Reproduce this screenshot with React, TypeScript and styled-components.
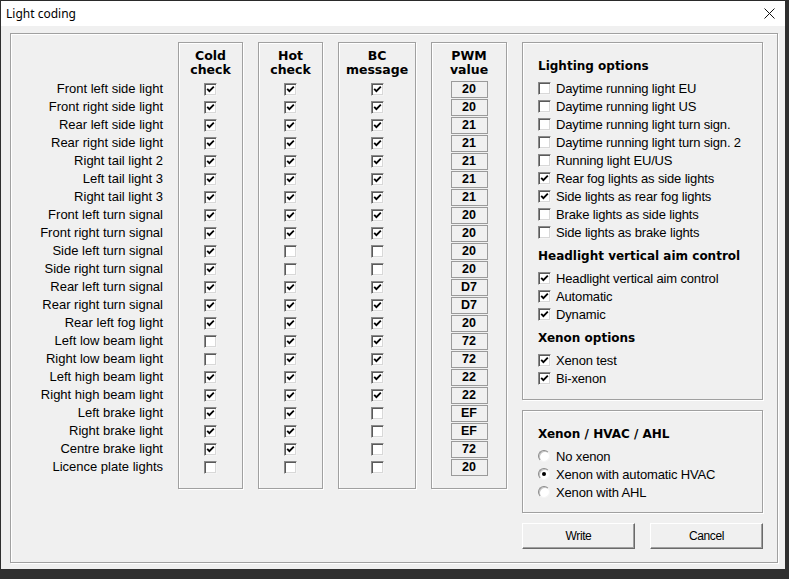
import React, { useState } from 'react';
import styled, { createGlobalStyle } from 'styled-components';

const GlobalStyle = createGlobalStyle`
    html, body {
        margin: 0;
        padding: 0;
        background: #2f2f2f;
    }
    body {
        font-family: "Liberation Sans", Arial, sans-serif;
        font-size: 13px;
        color: #000;
    }
`;

type LightRow = {
    label: string;
    cold: boolean;
    hot: boolean;
    bc: boolean;
    pwm: string;
};

const lightRows: LightRow[] = [
    { label: 'Front left side light', cold: true, hot: true, bc: true, pwm: '20' },
    { label: 'Front right side light', cold: true, hot: true, bc: true, pwm: '20' },
    { label: 'Rear left side light', cold: true, hot: true, bc: true, pwm: '21' },
    { label: 'Rear right side light', cold: true, hot: true, bc: true, pwm: '21' },
    { label: 'Right tail light 2', cold: true, hot: true, bc: true, pwm: '21' },
    { label: 'Left tail light 3', cold: true, hot: true, bc: true, pwm: '21' },
    { label: 'Right tail light 3', cold: true, hot: true, bc: true, pwm: '21' },
    { label: 'Front left turn signal', cold: true, hot: true, bc: true, pwm: '20' },
    { label: 'Front right turn signal', cold: true, hot: true, bc: true, pwm: '20' },
    { label: 'Side left turn signal', cold: true, hot: false, bc: false, pwm: '20' },
    { label: 'Side right turn signal', cold: true, hot: false, bc: false, pwm: '20' },
    { label: 'Rear left turn signal', cold: true, hot: true, bc: true, pwm: 'D7' },
    { label: 'Rear right turn signal', cold: true, hot: true, bc: true, pwm: 'D7' },
    { label: 'Rear left fog light', cold: true, hot: true, bc: true, pwm: '20' },
    { label: 'Left low beam light', cold: false, hot: true, bc: true, pwm: '72' },
    { label: 'Right low beam light', cold: false, hot: true, bc: true, pwm: '72' },
    { label: 'Left high beam light', cold: true, hot: true, bc: true, pwm: '22' },
    { label: 'Right high beam light', cold: true, hot: true, bc: true, pwm: '22' },
    { label: 'Left brake light', cold: true, hot: true, bc: false, pwm: 'EF' },
    { label: 'Right brake light', cold: true, hot: true, bc: false, pwm: 'EF' },
    { label: 'Centre brake light', cold: true, hot: true, bc: false, pwm: '72' },
    { label: 'Licence plate lights', cold: false, hot: false, bc: false, pwm: '20' },
];

const optionGroups = [
    {
        title: 'Lighting options',
        items: [
            { label: 'Daytime running light EU', on: false },
            { label: 'Daytime running light US', on: false },
            { label: 'Daytime running light turn sign.', on: false },
            { label: 'Daytime running light turn sign. 2', on: false },
            { label: 'Running light EU/US', on: false },
            { label: 'Rear fog lights as side lights', on: true },
            { label: 'Side lights as rear fog lights', on: true },
            { label: 'Brake lights as side lights', on: false },
            { label: 'Side lights as brake lights', on: false },
        ],
    },
    {
        title: 'Headlight vertical aim control',
        items: [
            { label: 'Headlight vertical aim control', on: true },
            { label: 'Automatic', on: true },
            { label: 'Dynamic', on: true },
        ],
    },
    {
        title: 'Xenon options',
        items: [
            { label: 'Xenon test', on: true },
            { label: 'Bi-xenon', on: true },
        ],
    },
];

const xenonModes = ['No xenon', 'Xenon with automatic HVAC', 'Xenon with AHL'];

const Window = styled.div`
    margin-left: 1px;
    width: 784px;
    height: 569px;
    background: #f0f0f0;
    display: flex;
    flex-direction: column;
    box-sizing: border-box;
`;

const TitleBar = styled.div`
    height: 26px;
    flex: 0 0 26px;
    background: #fff;
    border-top: 1px solid #2a2a2a;
    box-sizing: border-box;
    display: flex;
    align-items: center;
    justify-content: space-between;
    padding: 0 10px 0 5px;
`;

const TitleText = styled.span`
    font-family: "Noto Sans", "Open Sans", sans-serif;
    font-size: 12px;
    color: #000;
`;

const CloseButton = styled.div`
    width: 12px;
    height: 12px;
    display: flex;
    align-items: center;
    justify-content: center;
`;

const Body = styled.div`
    flex: 1;
    padding: 7px 7px 6px 9px;
    box-sizing: border-box;
`;

const Frame = styled.div`
    height: 530px;
    box-sizing: border-box;
    border: 1px solid #a0a0a0;
    box-shadow: inset 1px 1px 0 #fff, 1px 1px 0 #fff;
    padding: 8px 14px 0 0;
    display: flex;
    align-items: flex-start;
    gap: 15px;
`;

const LabelColumn = styled.div`
    width: 152px;
    padding-top: 38px;
    display: flex;
    flex-direction: column;
    align-items: flex-end;
`;

const RowLabel = styled.div`
    height: 18px;
    line-height: 18px;
    white-space: nowrap;
    font-size: 13px;
`;

const GroupColumn = styled.div<{ $width: number }>`
    width: ${p => p.$width}px;
    box-sizing: border-box;
    border: 1px solid #a0a0a0;
    box-shadow: inset 1px 1px 0 #fff, 1px 1px 0 #fff;
    padding-bottom: 12px;
    display: flex;
    flex-direction: column;
    align-items: center;
`;

const ColumnHeader = styled.div`
    height: 37px;
    padding-top: 6px;
    box-sizing: border-box;
    font-family: "DejaVu Sans", Verdana, sans-serif;
    font-weight: bold;
    font-size: 12.5px;
    line-height: 14px;
    text-align: center;
`;

const Cell = styled.div`
    height: 18px;
    display: flex;
    align-items: center;
    justify-content: center;
`;

const BoxFrame = styled.span`
    width: 13px;
    height: 13px;
    box-sizing: border-box;
    border: 1px solid;
    border-color: #8a8a8a #f4f4f4 #f4f4f4 #8a8a8a;
    box-shadow: inset 1px 1px 0 #5a5a5a, inset -1px -1px 0 #d8d8d8;
    background: #fff;
    display: inline-flex;
    align-items: center;
    justify-content: center;
    flex: 0 0 13px;
    cursor: default;
`;

const ValueBox = styled.div`
    width: 37px;
    height: 17px;
    box-sizing: border-box;
    border: 1px solid #9a9a9a;
    background: #f0f0f0;
    font-weight: bold;
    font-size: 12.5px;
    line-height: 15px;
    text-align: center;
`;

const SideColumn = styled.div`
    width: 241px;
    display: flex;
    flex-direction: column;
    gap: 10px;
`;

const Panel = styled.div<{ $height: number }>`
    height: ${p => p.$height}px;
    box-sizing: border-box;
    border: 1px solid #a0a0a0;
    box-shadow: inset 1px 1px 0 #fff, 1px 1px 0 #fff;
    padding: 14px 0 0 15px;
    display: flex;
    flex-direction: column;
`;

const PanelHeading = styled.div<{ $first?: boolean }>`
    height: 18px;
    line-height: 18px;
    margin: ${p => (p.$first ? '0' : '6px')} 0 4px;
    font-family: "DejaVu Sans", Verdana, sans-serif;
    font-weight: bold;
    font-size: 12px;
    white-space: nowrap;
`;

const OptionRow = styled.label`
    height: 18px;
    display: flex;
    align-items: center;
    gap: 5px;
    font-size: 13px;
    letter-spacing: -0.15px;
    white-space: nowrap;
    cursor: default;
`;

const RadioDot = styled.span`
    width: 12px;
    height: 12px;
    margin-right: 1px;
    box-sizing: border-box;
    border-radius: 50%;
    border: 1px solid;
    border-color: #8a8a8a #f4f4f4 #f4f4f4 #8a8a8a;
    box-shadow: inset 1px 1px 0 #c4c4c4;
    background: #fff;
    display: inline-flex;
    align-items: center;
    justify-content: center;
    flex: 0 0 12px;
`;

const Dot = styled.span`
    width: 4px;
    height: 4px;
    border-radius: 50%;
    background: #000;
`;

const ButtonRow = styled.div`
    display: flex;
    gap: 15px;
`;

const DialogButton = styled.button`
    width: 114px;
    height: 26px;
    box-sizing: border-box;
    background: #f0f0f0;
    border: 1px solid;
    border-color: #fff #6a6a6a #6a6a6a #fff;
    box-shadow: inset -1px -1px 0 #a0a0a0;
    font-family: "Liberation Sans", Arial, sans-serif;
    font-size: 12px;
    letter-spacing: -0.4px;
    color: #000;
    padding: 0;
`;

function Check({ on, onToggle }: { on: boolean; onToggle?: () => void }) {
    return (
        <BoxFrame onClick={onToggle}>
            {on ? (
                <svg width="9" height="9" viewBox="0 0 9 9">
                    <path d="M1.2 3.8 L3.4 6.2 L7.8 1.6" fill="none" stroke="#000" strokeWidth="1.8" />
                </svg>
            ) : null}
        </BoxFrame>
    );
}

export default function App() {
    const [rows, setRows] = useState(lightRows);
    const [groups, setGroups] = useState(optionGroups);
    const [mode, setMode] = useState(1);

    const toggleRow = (i: number, key: 'cold' | 'hot' | 'bc') => {
        setRows(rows.map((r, j) => (j === i ? { ...r, [key]: !r[key] } : r)));
    };

    const toggleOption = (g: number, i: number) => {
        setGroups(groups.map((grp, gi) => gi !== g ? grp : {
            ...grp,
            items: grp.items.map((it, ii) => (ii === i ? { ...it, on: !it.on } : it)),
        }));
    };

    const checkColumn = (title: React.ReactNode, key: 'cold' | 'hot' | 'bc', width: number) => (
        <GroupColumn $width={width}>
            <ColumnHeader>{title}</ColumnHeader>
            {rows.map((r, i) => (
                <Cell key={r.label}>
                    <Check on={r[key]} onToggle={() => toggleRow(i, key)} />
                </Cell>
            ))}
        </GroupColumn>
    );

    return (
        <>
            <GlobalStyle />
            <Window>
                <TitleBar>
                    <TitleText>Light coding</TitleText>
                    <CloseButton>
                        <svg width="11" height="11" viewBox="0 0 11 11">
                            <path d="M0.5 0.5 L10.5 10.5 M10.5 0.5 L0.5 10.5" stroke="#111" strokeWidth="1" />
                        </svg>
                    </CloseButton>
                </TitleBar>
                <Body>
                    <Frame>
                        <LabelColumn>
                            {rows.map(r => <RowLabel key={r.label}>{r.label}</RowLabel>)}
                        </LabelColumn>
                        {checkColumn(<>Cold<br />check</>, 'cold', 65)}
                        {checkColumn(<>Hot<br />check</>, 'hot', 65)}
                        {checkColumn(<>BC<br />message</>, 'bc', 78)}
                        <GroupColumn $width={76}>
                            <ColumnHeader>PWM<br />value</ColumnHeader>
                            {rows.map(r => (
                                <Cell key={r.label}>
                                    <ValueBox>{r.pwm}</ValueBox>
                                </Cell>
                            ))}
                        </GroupColumn>
                        <SideColumn>
                            <Panel $height={358}>
                                {groups.map((grp, g) => (
                                    <React.Fragment key={grp.title}>
                                        <PanelHeading $first={g === 0}>{grp.title}</PanelHeading>
                                        {grp.items.map((it, i) => (
                                            <OptionRow key={it.label}>
                                                <Check on={it.on} onToggle={() => toggleOption(g, i)} />
                                                {it.label}
                                            </OptionRow>
                                        ))}
                                    </React.Fragment>
                                ))}
                            </Panel>
                            <Panel $height={103}>
                                <PanelHeading $first>Xenon / HVAC / AHL</PanelHeading>
                                {xenonModes.map((m, i) => (
                                    <OptionRow key={m} onClick={() => setMode(i)}>
                                        <RadioDot>{mode === i ? <Dot /> : null}</RadioDot>
                                        {m}
                                    </OptionRow>
                                ))}
                            </Panel>
                            <ButtonRow>
                                <DialogButton>Write</DialogButton>
                                <DialogButton>Cancel</DialogButton>
                            </ButtonRow>
                        </SideColumn>
                    </Frame>
                </Body>
            </Window>
        </>
    );
}
